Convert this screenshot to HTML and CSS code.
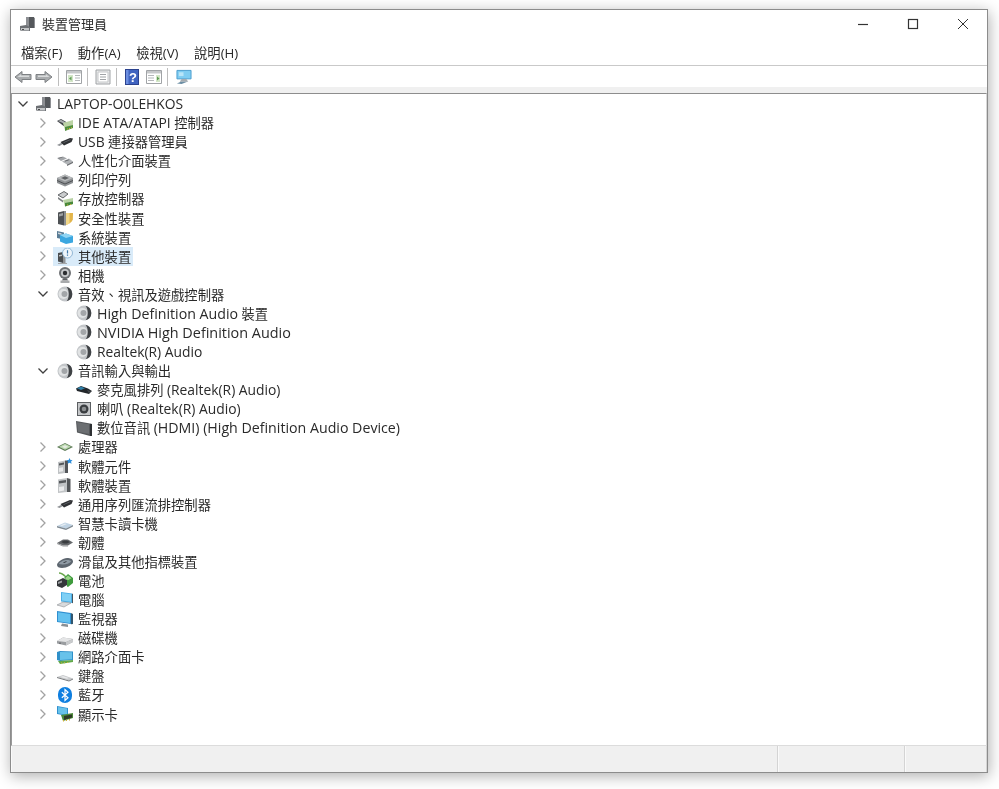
FILE: index.html
```html
<!DOCTYPE html>
<html lang="zh-Hant">
<head>
<meta charset="utf-8">
<title>裝置管理員</title>
<link rel="stylesheet" href="styles.css">
</head>
<body>
<svg class="defs" width="0" height="0" aria-hidden="true">
<defs>
<symbol id="chev-r" viewBox="0 0 16 16"><path d="M5.5 3.5 10 8l-4.500 4.500" fill="none" stroke="#a2a2a2" stroke-width="1.300"/></symbol>
<symbol id="chev-d" viewBox="0 0 16 16"><path d="M3.500 5.500 8 10l4.500-4.500" fill="none" stroke="#404040" stroke-width="1.300"/></symbol>
<symbol id="i-root" viewBox="0 0 16 16"><path d="M6 1h7l2 1v10H6z" fill="#8d8f93"/><path d="M9 1h5v11H9z" fill="#55585c"/><path d="M0 10l6-1 4 2v4H1l-1-1z" fill="#6d7074"/><path d="M1 12h8v2.500H1z" fill="#c4c6c8"/><path d="M2 13h2v.8H2z" fill="#222"/></symbol>
<symbol id="i-ide" viewBox="0 0 16 16"><path d="M0 6l4-2 7 4v2L8 12z" fill="#3f4246"/><path d="M1 6l3-1.200 6 3.400-2 .8z" fill="#a9acb0"/><path d="M6 8l10-3v7l-8 3z" fill="#bcd3a6"/><path d="M8 12l8-2V13l-8 3z" fill="#4f8f3e"/><path d="M10 13.400h1v1h-1zM12 13h1v1h-1zM14 12.300h1v1h-1z" fill="#d2b13a"/></symbol>
<symbol id="i-usb" viewBox="0 0 16 16"><path d="M0 11l5-2.500 2.500.5-5 3z" fill="#8f9296"/><path d="M3.500 8l9.500-4 3 .5-1.500 3.500L7 11.500z" fill="#2f3134"/><path d="M6 8.500l7-3 1 .2-7 3z" fill="#6c6f73"/></symbol>
<symbol id="i-hid" viewBox="0 0 16 16"><path d="M0 5l6-1.500 4 2-6 2.500z" fill="#a3a6a9"/><path d="M1 5l4-.8.800.4-4 .9z" fill="#55585b"/><path d="M5 8.500l7-3 4 3-6 3z" fill="#b1b4b7"/><path d="M10 11.500l6-3V10l-6 3z" fill="#6d7073"/><path d="M7.500 8l4-1.500.8.500-4 1.500z" fill="#54575a"/></symbol>
<symbol id="i-print" viewBox="0 0 16 16"><path d="M0 6l8-3.500L16 6v5l-8 3.500L0 11z" fill="#8e9194"/><path d="M0 6l8-3.500L16 6 8 9.500z" fill="#b8babc"/><path d="M4 6l4-1.800L12 6 8 7.800z" fill="#5f6265"/><path d="M0 8.500l8 3.500 8-3.500" fill="none" stroke="#4d5053"/></symbol>
<symbol id="i-storage" viewBox="0 0 16 16"><path d="M1 4l6-3.500 4 2.500-5 4z" fill="#c9cbcd" stroke="#45484b" stroke-width=".8"/><path d="M1 6l5 3.500v2L1 8z" fill="#7d8083"/><path d="M6 9l10-2v6l-8 2.500z" fill="#b9d2a5"/><path d="M8 12l8-1.500V13l-8 2.500z" fill="#47883a"/><path d="M10 13.500h1v1h-1zM13 13h1v1h-1z" fill="#d2b13a"/></symbol>
<symbol id="i-sec" viewBox="0 0 16 16"><path d="M1 2.500L7 1v14.500L1 14z" fill="#4e5154"/><path d="M2 4l4-1v2.600l-4 1z" fill="#9ea1a3"/><path d="M7 1h2v14.500H7z" fill="#8c8f91"/><path d="M9 3h7l-.2 6.500c-.6 2.500-3.500 4.500-6.800 5.500z" fill="#e3b54a"/><path d="M9 3h3.500V13.500L9 15z" fill="#f2d88a"/></symbol>
<symbol id="i-sys" viewBox="0 0 16 16"><path d="M0 2l7 1.500v7L0 9z" fill="#5a7d96"/><path d="M3 6l6-1.500 7 2.500v6.500l-7 1.500-6-2.500z" fill="#3ba7e0"/><path d="M3 6l6-1.500L16 7l-7 2z" fill="#8fd4f3"/><path d="M1 3.500l3.500.7v1.500L1 5z" fill="#c9d3d9"/></symbol>
<symbol id="i-other" viewBox="0 0 16 16"><path d="M1 5l5-1v11l-5-1.500z" fill="#4a4d50"/><path d="M6 4l2.500 1v10H6z" fill="#909396"/><path d="M2 7l3-.6V8l-3 .6z" fill="#bfc1c3"/><circle cx="10.500" cy="5" r="5" fill="#eef5fb" stroke="#7fa9cc" stroke-width=".8"/><path d="M10.500 2.200v3.300M10.500 6.500v1.200" stroke="#3f78ab" stroke-width="1.200"/><path d="M1 15h9v1H1z" fill="#a5a7a9"/></symbol>
<symbol id="i-cam" viewBox="0 0 16 16"><circle cx="8" cy="6" r="6" fill="#6f7275"/><circle cx="8" cy="6" r="4" fill="#c6c8ca"/><circle cx="8" cy="6" r="2.200" fill="#2b2d30"/><path d="M6 11.500h4l1 2H5z" fill="#5c5f62"/><path d="M3.500 13.500h9V16h-9z" fill="#a8aaac"/></symbol>
<symbol id="i-audio" viewBox="0 0 16 16"><circle cx="8" cy="8" r="7.500" fill="#c3c6c9"/><circle cx="6.500" cy="8" r="5" fill="#e1e3e4"/><circle cx="7.500" cy="8" r="3" fill="#a3a6a9"/><path d="M9.500 .7A7.500 7.500 0 0 1 9.500 15.300C12.500 12 12.500 4 9.500 .7z" fill="#3f4245"/></symbol>
<symbol id="i-mic" viewBox="0 0 16 16"><path d="M0 6.500l5-2.500 7 2.500 4 2.500-3 3L5 10 1 9z" fill="#23272b"/><path d="M1 6.300l4-1.800 4 1.800-4 1.700z" fill="#2f7fa8"/><path d="M11 8l4 1.300-2 1.700z" fill="#454a4f"/></symbol>
<symbol id="i-spk" viewBox="0 0 16 16"><path d="M1 1h14v14H1z" fill="#5b5e61"/><path d="M2 2h12v12H2z" fill="#c5c7c9"/><circle cx="8" cy="8" r="4.500" fill="#3a3d40"/><circle cx="8" cy="8" r="2.300" fill="#8b8e90"/></symbol>
<symbol id="i-hdmi" viewBox="0 0 16 16"><path d="M0 1l14 2.500V16L1 12.500z" fill="#54575a"/><path d="M1 2.200l12 2.100v9.700L2 11.800z" fill="#6b6e71"/><path d="M14 3.500l2 .5v12h-2z" fill="#2d3033"/></symbol>
<symbol id="i-cpu" viewBox="0 0 16 16"><path d="M0 8l8-4 8 4-8 4z" fill="#5d7a56"/><path d="M2 7.800l6-3 6 3-6 3z" fill="#bcd9b0"/><path d="M5 7.800l3-1.500 3 1.500-3 1.500z" fill="#e7ebe4"/></symbol>
<symbol id="i-swc" viewBox="0 0 16 16"><path d="M1 4l7-1.500V15l-7 1z" fill="#bfc2c4"/><path d="M8 2.500h3V15H8z" fill="#53565a"/><path d="M2 5.500l5-1v2l-5 1z" fill="#54575a"/><path d="M2 10l4-.8v4L2 14z" fill="#e7e8e9"/><path d="M12.500 0l1 1.900 2 .1-1.400 1.600.5 2.100-2.100-1-2 1 .5-2.100L9.600 2l2-.1z" fill="#2f8fdc"/></symbol>
<symbol id="i-swd" viewBox="0 0 16 16"><path d="M1 2.500l9-1.500V15l-9 1z" fill="#c1c4c6"/><path d="M10 1l3.500 1V15l-3.500 0z" fill="#54575a"/><path d="M2 4l7-1v2.500l-7 1z" fill="#54575a"/><path d="M2 10l5-.8v4.300L2 14.500z" fill="#ebeced"/></symbol>
<symbol id="i-card" viewBox="0 0 16 16"><path d="M0 11l8-3.500 8 2.500-7 3.500z" fill="#bfd3e4"/><path d="M0 11l9 2.500 7-3.500v1.500L9 15 0 12.500z" fill="#7f8a93"/><path d="M3 10.500l5-2 2 .6-5 2z" fill="#e8eef3"/></symbol>
<symbol id="i-fw" viewBox="0 0 16 16"><path d="M0 9l6-3.500h5l5 3-5 3H6z" fill="#66696c"/><path d="M4 8l3-1.400h3L13 8l-3 1.400H7z" fill="#3a3d40"/><path d="M0 9l6 2.500h5v1H6l-6-2.500z" fill="#97999c"/></symbol>
<symbol id="i-mouse" viewBox="0 0 16 16"><path d="M0 12c0-3 6-7 10-7 3.500 0 6 1 6 3.500 0 3-6 6.500-11 6.500-3 0-5-1-5-3z" fill="#5e6770"/><path d="M2 11c1-2.500 5-4 8-4 2 0 4 .5 4 1.500-2 2.500-7 3.500-12 2.500z" fill="#8f9aa4"/><path d="M6 9.500l3-1.200 1 .5-3 1.200z" fill="#33383d"/></symbol>
<symbol id="i-bat" viewBox="0 0 16 16"><path d="M2 1c3 0 5 2 7 4" fill="none" stroke="#6aa84f" stroke-width="1.300"/><path d="M0 9l6-3 4 2v5l-5 3-5-2z" fill="#34373a"/><path d="M7 6l4-4 5 4v5l-5 4-1-.5V8z" fill="#3f9b3d"/><path d="M11 3.500l3.500 2.700-3.500 2-3-2z" fill="#9bd388"/><path d="M1 10l4-1.500v2L1 12z" fill="#9ea1a3"/></symbol>
<symbol id="i-pc" viewBox="0 0 16 16"><path d="M4 0l11 1.500V11L4 9.500z" fill="#4aaee6"/><path d="M5 1l9 1.300v7.500L5 8.500z" fill="#7fd0f5"/><path d="M15 1.500l1 .4V11l-1 .2z" fill="#46565f"/><path d="M0 13l6-3 8 1-7 4z" fill="#d8dadc" stroke="#8f9295" stroke-width=".6"/></symbol>
<symbol id="i-mon" viewBox="0 0 16 16"><path d="M0 0l14 2v11L0 11z" fill="#2f8fd0"/><path d="M1 1.200l12 1.700v9L1 10.200z" fill="#63c1ef"/><path d="M14 2l2 1v10l-2 .2z" fill="#33566d"/><path d="M5 12.500l6 1v2.500l-7-1z" fill="#8a9095"/></symbol>
<symbol id="i-disk" viewBox="0 0 16 16"><path d="M0 11l6-3.500 10 1.500v3l-7 3.500-9-2z" fill="#9a9da0"/><path d="M0 11l6-3.500L16 9l-7 3z" fill="#e4e5e6"/><path d="M9 12l7-3v3l-7 3.500z" fill="#c9cbcd"/><path d="M2 12.800h2v.7H2z" fill="#4f5154"/></symbol>
<symbol id="i-net" viewBox="0 0 16 16"><path d="M0 3l3-1 13 .5V11l-13 1-3-1z" fill="#2f90c9"/><path d="M3 3l12 .2v7L3 11z" fill="#68c2ea"/><path d="M1 12l12-.8 3-.2v2L3 15z" fill="#61a84a"/><path d="M4 13.500h1v1H4zM7 13.200h1v1H7zM10 12.900h1v1h-1z" fill="#d4b23b"/></symbol>
<symbol id="i-kbd" viewBox="0 0 16 16"><path d="M0 9l6-2 10 3.500-4 2z" fill="#c7c9cb"/><path d="M0 9l12 3.500 4-2v1l-4 2L0 10z" fill="#75787b"/><path d="M3 9l3-1 6 2-2 .8z" fill="#e9eaeb"/></symbol>
<symbol id="i-bt" viewBox="0 0 16 16"><rect x="1" y="0" width="14" height="16" rx="7" fill="#0f7fe0"/><path d="M4.800 5.200 11 10.800 8 13.500V2.500l3 2.700-6.200 5.600" fill="none" stroke="#fff" stroke-width="1.200"/></symbol>
<symbol id="i-gpu" viewBox="0 0 16 16"><path d="M0 0l11 2v8L0 8z" fill="#2f90cf"/><path d="M1 1l9 1.600v6.300L1 7.300z" fill="#68c2ea"/><path d="M4 9l12-2v5l-10 3z" fill="#4c8a3a"/><path d="M7 10l8-1.500v3L7 14z" fill="#2f3a28"/><path d="M6 14h1v1.500H6zM9 13.500h1V15H9zM12 13h1v1.500h-1z" fill="#d4b23b"/></symbol>

<symbol id="t-back" viewBox="0 0 18 16"><path d="M1 8l7-5.500V5.500h9v5H8v3z" fill="#a9acae" stroke="#7d8083"/><path d="M3.500 8 7 5.200v1.300h8v1.500z" fill="#d9dbdc"/></symbol>
<symbol id="t-fwd" viewBox="0 0 18 16"><path d="M17 8l-7-5.500V5.500H1v5h9v3z" fill="#a9acae" stroke="#7d8083"/><path d="M3 6.500h8V5.200L14.500 8H3z" fill="#d9dbdc"/></symbol>
<symbol id="t-tree" viewBox="0 0 16 16"><path d="M.5 1.500h15v13H.5z" fill="#fff" stroke="#a0a3a6"/><path d="M1 2h14v2.500H1z" fill="#c6c8ca"/><path d="M2 6h5v7H2z" fill="#d3e6c7"/><path d="M9 6h5v1H9zM9 8.500h5v1H9zM9 11h5v1H9z" fill="#b4b7ba"/><path d="M5.500 7.500 3 9.500l2.500 2z" fill="#5f9a55"/></symbol>
<symbol id="t-prop" viewBox="0 0 16 16"><path d="M1 1h14v14H1z" fill="#e9eaeb" stroke="#a0a3a6"/><path d="M3 3h10v10H3z" fill="#fff" stroke="#c5c7c9"/><path d="M5 5h6v1H5zM5 7.500h6v1H5zM5 10h6v1H5z" fill="#a0a3a6"/></symbol>
<symbol id="t-help" viewBox="0 0 14 16"><rect x=".5" y=".5" width="13" height="15" fill="#3f63c0" stroke="#2b428e"/><path d="M1 1h2.500v14H1z" fill="#6c8ee0"/><text x="8" y="13" text-anchor="middle" class="help-q">?</text></symbol>
<symbol id="t-action" viewBox="0 0 16 16"><path d="M.5 1.500h15v13H.5z" fill="#fff" stroke="#a0a3a6"/><path d="M1 2h14v2.500H1z" fill="#c6c8ca"/><path d="M10 6h4v7h-4z" fill="#d3e6c7"/><path d="M2 6h6v1H2zM2 8.500h6v1H2zM2 11h6v1H2z" fill="#b4b7ba"/><path d="M11 7.500l2.500 2-2.500 2z" fill="#5f9a55"/></symbol>
<symbol id="t-scan" viewBox="0 0 17 16"><path d="M1 1h15v9H1z" fill="#7fcdf2" stroke="#4a9ccd"/><path d="M3 3h5v4H3z" fill="#b9e5f8"/><path d="M6 10h5l2 3H4z" fill="#a7acb0"/><path d="M1 15l4-2h7l-6 2.500z" fill="#6d8fa5"/></symbol>
</defs>
</svg>

<div class="window">
  <header class="titlebar">
    <svg class="title-icon"><use href="#i-root"/></svg>
    <span class="title-text">裝置管理員</span>
    <div class="controls">
      <svg class="ctl" viewBox="0 0 12 12"><path d="M1 6.500h10" stroke="#333" stroke-width="1.200"/></svg>
      <svg class="ctl" viewBox="0 0 12 12"><rect x="1.500" y="1.500" width="9" height="9" fill="none" stroke="#333" stroke-width="1.200"/></svg>
      <svg class="ctl" viewBox="0 0 12 12"><path d="M1 1l10 10M11 1 1 11" stroke="#333" stroke-width="1"/></svg>
    </div>
  </header>
  <nav class="menubar">
    <span>檔案(F)</span><span>動作(A)</span><span>檢視(V)</span><span>說明(H)</span>
  </nav>
  <div class="toolbar">
    <svg class="tb tb-wide"><use href="#t-back"/></svg>
    <svg class="tb tb-wide"><use href="#t-fwd"/></svg>
    <i class="sep"></i>
    <svg class="tb"><use href="#t-tree"/></svg>
    <i class="sep"></i>
    <svg class="tb"><use href="#t-prop"/></svg>
    <i class="sep"></i>
    <svg class="tb tb-narrow"><use href="#t-help"/></svg>
    <svg class="tb"><use href="#t-action"/></svg>
    <i class="sep sep-last"></i>
    <svg class="tb"><use href="#t-scan"/></svg>
  </div>
  <div class="strip"></div>
  <main class="tree">
    <div class="row l0"><svg class="chev"><use href="#chev-d"/></svg><span class="node"><svg class="ico"><use href="#i-root"/></svg><span class="cap">LAPTOP-O0LEHKOS</span></span></div>
    <div class="row l1"><svg class="chev"><use href="#chev-r"/></svg><span class="node"><svg class="ico"><use href="#i-ide"/></svg><span><span class="cap">IDE ATA/ATAPI</span> 控制器</span></span></div>
    <div class="row l1"><svg class="chev"><use href="#chev-r"/></svg><span class="node"><svg class="ico"><use href="#i-usb"/></svg><span><span class="cap">USB</span> 連接器管理員</span></span></div>
    <div class="row l1"><svg class="chev"><use href="#chev-r"/></svg><span class="node"><svg class="ico"><use href="#i-hid"/></svg><span>人性化介面裝置</span></span></div>
    <div class="row l1"><svg class="chev"><use href="#chev-r"/></svg><span class="node"><svg class="ico"><use href="#i-print"/></svg><span>列印佇列</span></span></div>
    <div class="row l1"><svg class="chev"><use href="#chev-r"/></svg><span class="node"><svg class="ico"><use href="#i-storage"/></svg><span>存放控制器</span></span></div>
    <div class="row l1"><svg class="chev"><use href="#chev-r"/></svg><span class="node"><svg class="ico"><use href="#i-sec"/></svg><span>安全性裝置</span></span></div>
    <div class="row l1"><svg class="chev"><use href="#chev-r"/></svg><span class="node"><svg class="ico"><use href="#i-sys"/></svg><span>系統裝置</span></span></div>
    <div class="row l1"><svg class="chev"><use href="#chev-r"/></svg><span class="node selected"><svg class="ico"><use href="#i-other"/></svg><span>其他裝置</span></span></div>
    <div class="row l1"><svg class="chev"><use href="#chev-r"/></svg><span class="node"><svg class="ico"><use href="#i-cam"/></svg><span>相機</span></span></div>
    <div class="row l1"><svg class="chev"><use href="#chev-d"/></svg><span class="node"><svg class="ico"><use href="#i-audio"/></svg><span>音效、視訊及遊戲控制器</span></span></div>
    <div class="row l2"><span class="node"><svg class="ico"><use href="#i-audio"/></svg><span><span class="lat">High Definition Audio</span> 裝置</span></span></div>
    <div class="row l2"><span class="node"><svg class="ico"><use href="#i-audio"/></svg><span class="lat-wide">NVIDIA High Definition Audio</span></span></div>
    <div class="row l2"><span class="node"><svg class="ico"><use href="#i-audio"/></svg><span class="cap">Realtek(R) Audio</span></span></div>
    <div class="row l1"><svg class="chev"><use href="#chev-d"/></svg><span class="node"><svg class="ico"><use href="#i-audio"/></svg><span>音訊輸入與輸出</span></span></div>
    <div class="row l2"><span class="node"><svg class="ico"><use href="#i-mic"/></svg><span>麥克風排列 <span class="cap">(Realtek(R) Audio)</span></span></span></div>
    <div class="row l2"><span class="node"><svg class="ico"><use href="#i-spk"/></svg><span>喇叭 <span class="cap">(Realtek(R) Audio)</span></span></span></div>
    <div class="row l2"><span class="node"><svg class="ico"><use href="#i-hdmi"/></svg><span>數位音訊 <span class="lat">(HDMI) (High Definition Audio Device)</span></span></span></div>
    <div class="row l1"><svg class="chev"><use href="#chev-r"/></svg><span class="node"><svg class="ico"><use href="#i-cpu"/></svg><span>處理器</span></span></div>
    <div class="row l1"><svg class="chev"><use href="#chev-r"/></svg><span class="node"><svg class="ico"><use href="#i-swc"/></svg><span>軟體元件</span></span></div>
    <div class="row l1"><svg class="chev"><use href="#chev-r"/></svg><span class="node"><svg class="ico"><use href="#i-swd"/></svg><span>軟體裝置</span></span></div>
    <div class="row l1"><svg class="chev"><use href="#chev-r"/></svg><span class="node"><svg class="ico"><use href="#i-usb"/></svg><span>通用序列匯流排控制器</span></span></div>
    <div class="row l1"><svg class="chev"><use href="#chev-r"/></svg><span class="node"><svg class="ico"><use href="#i-card"/></svg><span>智慧卡讀卡機</span></span></div>
    <div class="row l1"><svg class="chev"><use href="#chev-r"/></svg><span class="node"><svg class="ico"><use href="#i-fw"/></svg><span>韌體</span></span></div>
    <div class="row l1"><svg class="chev"><use href="#chev-r"/></svg><span class="node"><svg class="ico"><use href="#i-mouse"/></svg><span>滑鼠及其他指標裝置</span></span></div>
    <div class="row l1"><svg class="chev"><use href="#chev-r"/></svg><span class="node"><svg class="ico"><use href="#i-bat"/></svg><span>電池</span></span></div>
    <div class="row l1"><svg class="chev"><use href="#chev-r"/></svg><span class="node"><svg class="ico"><use href="#i-pc"/></svg><span>電腦</span></span></div>
    <div class="row l1"><svg class="chev"><use href="#chev-r"/></svg><span class="node"><svg class="ico"><use href="#i-mon"/></svg><span>監視器</span></span></div>
    <div class="row l1"><svg class="chev"><use href="#chev-r"/></svg><span class="node"><svg class="ico"><use href="#i-disk"/></svg><span>磁碟機</span></span></div>
    <div class="row l1"><svg class="chev"><use href="#chev-r"/></svg><span class="node"><svg class="ico"><use href="#i-net"/></svg><span>網路介面卡</span></span></div>
    <div class="row l1"><svg class="chev"><use href="#chev-r"/></svg><span class="node"><svg class="ico"><use href="#i-kbd"/></svg><span>鍵盤</span></span></div>
    <div class="row l1"><svg class="chev"><use href="#chev-r"/></svg><span class="node"><svg class="ico"><use href="#i-bt"/></svg><span>藍牙</span></span></div>
    <div class="row l1"><svg class="chev"><use href="#chev-r"/></svg><span class="node"><svg class="ico"><use href="#i-gpu"/></svg><span>顯示卡</span></span></div>
  </main>
  <footer class="status">
    <div class="pane pane-main"></div>
    <div class="pane pane-mid"></div>
    <div class="pane pane-end"></div>
  </footer>
</div>
</body>
</html>
```

FILE: styles.css
```css
* { box-sizing: border-box; }
html, body { margin: 0; height: 100%; }
body {
  background: #fff;
  color: #2a2a2a;
  font-family: "Open Sans", "Noto Sans CJK TC", sans-serif;
  font-size: 13.3px;
  overflow: hidden;
  padding: 9px 0 0 10px;
}
.defs { position: absolute; }
.window {
  width: 978px;
  height: 764px;
  background: #fff;
  border: 1px solid #8c8c8c;
  box-shadow: 1px 3px 14px rgba(0, 0, 0, .32);
  display: flex;
  flex-direction: column;
  filter: blur(.3px);
}
.titlebar {
  height: 32px;
  flex: none;
  display: flex;
  align-items: center;
  padding: 0 0 5px 9px;
}
.title-icon { width: 16px; height: 16px; }
.title-text { margin-left: 6px; font-size: 13px; }
.controls {
  margin-left: auto;
  display: flex;
  gap: 38px;
  padding-right: 18px;
}
.ctl { width: 12px; height: 12px; }
.menubar {
  height: 24px;
  flex: none;
  display: flex;
  gap: 15.500px;
  align-items: center;
  padding: 0 0 3px 10px;
  border-bottom: 1px solid #c9c9c9;
}
.toolbar {
  height: 21px;
  flex: none;
  display: flex;
  align-items: center;
  padding-left: 3px;
}
.tb { width: 16px; height: 16px; margin: 0 3px 0 0; }
.tb-wide { width: 18px; margin-right: 3px; }
.tb-narrow { width: 14px; margin: 0 7px 0 1px; }
.sep { width: 1px; height: 18px; background: #bdbdbd; margin: 0 7px 0 2px; }
.sep-last { margin-right: 8px; }
.help-q { fill: #fff; font: bold 13px "Liberation Sans", sans-serif; }
.strip { height: 6px; flex: none; background: #f0f0f0; }
.tree {
  flex: 1;
  min-height: 0;
  border-top: 1px solid #8d8d8d;
  border-left: 1px solid #9a9a9a;
  border-right: 1px solid #d8d8d8;
  border-bottom: 1px solid #dcdcdc;
}
.row {
  height: 19.090px;
  display: flex;
  align-items: center;
  white-space: nowrap;
}
.l0 { padding-left: 3px; }
.l1 { padding-left: 23px; }
.l2 { padding-left: 60px; }
.chev { width: 16px; height: 16px; flex: none; }
.node {
  display: inline-flex;
  align-items: center;
  height: 19px;
  padding: 0 2px 0 4px;
  margin-left: 2px;
}
.l0 .node { margin-left: 1px; }
.l2 .node { margin-left: 0; }
.ico { width: 16px; height: 16px; margin-right: 5px; flex: none; }
.cap { font-size: 13.850px; }
.lat { font-size: 14.200px; }
.lat-wide { font-size: 14.400px; }
.selected { background: #d9ebf9; }
.status {
  height: 26px;
  flex: none;
  display: flex;
  background: #f0f0f0;
}
.pane { border-right: 1px solid #d4d4d4; border-left: 1px solid #fafafa; }
.pane-main { width: 767px; }
.pane-mid { width: 127px; }
.pane-end { flex: 1; }
```
